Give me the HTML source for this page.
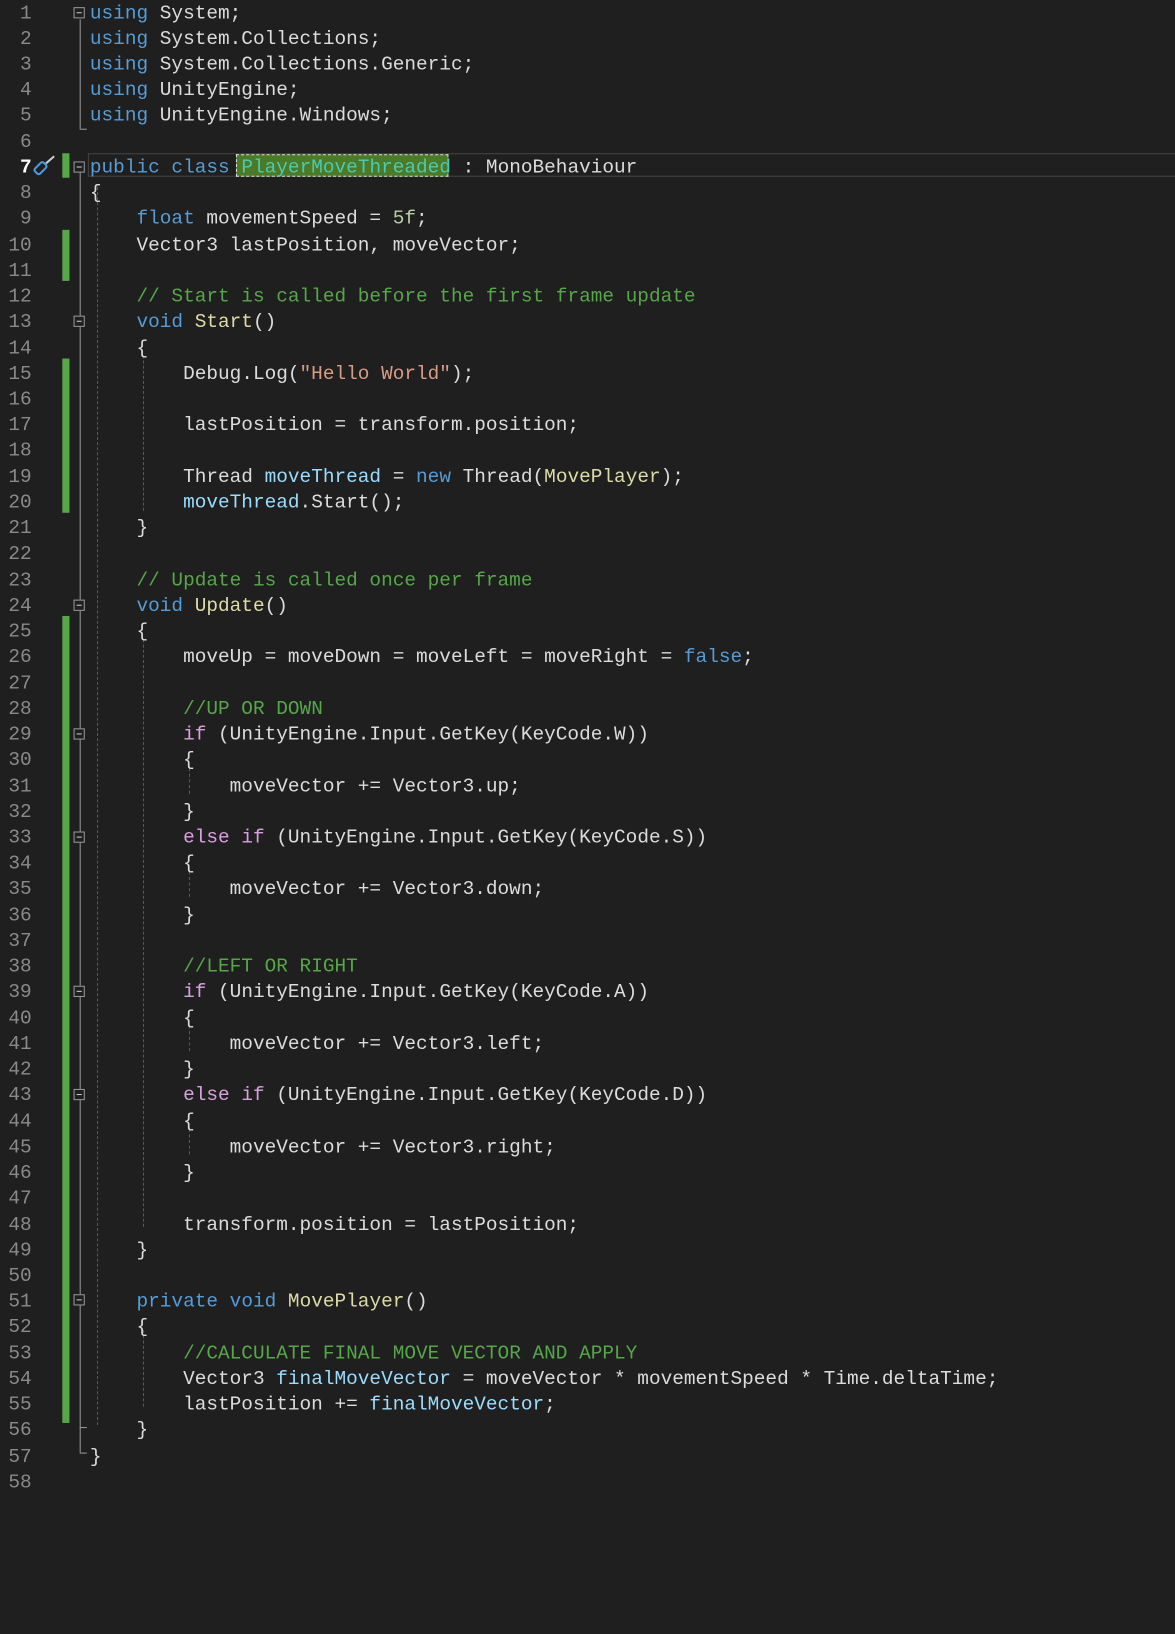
<!DOCTYPE html>
<html><head><meta charset="utf-8"><style>
html,body{margin:0;padding:0;background:#1f1f1f;width:1175px;height:1600px;overflow:hidden}
body{font-family:"Liberation Mono",monospace;font-size:19px}
#w{position:absolute;left:0;top:0;width:1175px;height:1600px;transform:scale(1.0215);transform-origin:0 0}
pre{margin:0;font:inherit;line-height:25.23px;position:absolute;top:0.5px}
#nums{left:0;width:31px;text-align:right;color:#8a8a8a}
#code{left:88px;color:#dcdcdc}
.k{color:#569cd6}.c{color:#57a64a}.s{color:#d69d85}.n{color:#b5cea8}.m{color:#dcdcaa}.p{color:#d8a0df}.v{color:#9cdcfe}
.g{position:absolute;left:61px;width:7px;background:#57a64a}
.f{position:absolute;left:72px;width:11px;height:11px;border:1px solid #999;background:#1f1f1f;box-sizing:border-box}
.f:after{content:"";position:absolute;left:2px;right:2px;top:4px;height:1px;background:#ccc}
.fl{position:absolute;left:78px;width:1px;background:#999}
.tk{position:absolute;left:78px;width:7px;height:1px;background:#999}
.ig{position:absolute;width:0;border-left:1px dashed #5a5a5a}
</style></head><body><div id="w">
<div style="position:absolute;left:86px;top:150px;width:1100px;height:23px;border:1px solid #464646;box-sizing:border-box"></div>
<div style="position:absolute;left:231px;top:151px;width:208px;height:22px;background:#4b7a28;border:1px dashed #ddd;box-sizing:border-box"></div>
<div class="g" style="top:150px;height:24px"></div>
<div class="g" style="top:225px;height:50px"></div>
<div class="g" style="top:351px;height:151px"></div>
<div class="g" style="top:603px;height:790px"></div>
<div class="fl" style="top:19px;height:107px"></div><div class="tk" style="top:126px"></div>
<div class="fl" style="top:168px;height:1254px"></div><div class="tk" style="top:1422px"></div>
<div class="tk" style="top:1397px"></div>
<div class="ig" style="left:95px;top:183px;height:1212px"></div>
<div class="ig" style="left:140px;top:348px;height:152px"></div>
<div class="ig" style="left:140px;top:626px;height:575px"></div>
<div class="ig" style="left:140px;top:1302px;height:75px"></div>
<div class="ig" style="left:185px;top:752px;height:25px"></div>
<div class="ig" style="left:185px;top:853px;height:25px"></div>
<div class="ig" style="left:185px;top:1004px;height:25px"></div>
<div class="ig" style="left:185px;top:1105px;height:25px"></div>
<div class="f" style="top:7px"></div>
<div class="f" style="top:158px"></div>
<div class="f" style="top:309px"></div>
<div class="f" style="top:587px"></div>
<div class="f" style="top:713px"></div>
<div class="f" style="top:814px"></div>
<div class="f" style="top:965px"></div>
<div class="f" style="top:1066px"></div>
<div class="f" style="top:1267px"></div>
<svg style="position:absolute;left:32px;top:151px" width="24" height="22" viewBox="0 0 24 22"><path d="M13 9 L21 2" stroke="#ccc" stroke-width="2"/><rect x="4" y="8" width="7" height="12" rx="2" transform="rotate(45 8 14)" fill="none" stroke="#4c9be0" stroke-width="2"/></svg>
<pre id="nums">1
2
3
4
5
6
<b style="color:#fff">7</b>
8
9
10
11
12
13
14
15
16
17
18
19
20
21
22
23
24
25
26
27
28
29
30
31
32
33
34
35
36
37
38
39
40
41
42
43
44
45
46
47
48
49
50
51
52
53
54
55
56
57
58</pre>
<pre id="code"><span class="k">using</span> System;
<span class="k">using</span> System.Collections;
<span class="k">using</span> System.Collections.Generic;
<span class="k">using</span> UnityEngine;
<span class="k">using</span> UnityEngine.Windows;

<span class="k">public</span> <span class="k">class</span> <span style="color:#4ec9b0">PlayerMoveThreaded</span> : MonoBehaviour
{
    <span class="k">float</span> movementSpeed = <span class="n">5f</span>;
    Vector3 lastPosition, moveVector;

    <span class="c">// Start is called before the first frame update</span>
    <span class="k">void</span> <span class="m">Start</span>()
    {
        Debug.Log(<span class="s">"Hello World"</span>);

        lastPosition = transform.position;

        Thread <span class="v">moveThread</span> = <span class="k">new</span> Thread(<span class="m">MovePlayer</span>);
        <span class="v">moveThread</span>.Start();
    }

    <span class="c">// Update is called once per frame</span>
    <span class="k">void</span> <span class="m">Update</span>()
    {
        moveUp = moveDown = moveLeft = moveRight = <span class="k">false</span>;

        <span class="c">//UP OR DOWN</span>
        <span class="p">if</span> (UnityEngine.Input.GetKey(KeyCode.W))
        {
            moveVector += Vector3.up;
        }
        <span class="p">else</span> <span class="p">if</span> (UnityEngine.Input.GetKey(KeyCode.S))
        {
            moveVector += Vector3.down;
        }

        <span class="c">//LEFT OR RIGHT</span>
        <span class="p">if</span> (UnityEngine.Input.GetKey(KeyCode.A))
        {
            moveVector += Vector3.left;
        }
        <span class="p">else</span> <span class="p">if</span> (UnityEngine.Input.GetKey(KeyCode.D))
        {
            moveVector += Vector3.right;
        }

        transform.position = lastPosition;
    }

    <span class="k">private</span> <span class="k">void</span> <span class="m">MovePlayer</span>()
    {
        <span class="c">//CALCULATE FINAL MOVE VECTOR AND APPLY</span>
        Vector3 <span class="v">finalMoveVector</span> = moveVector * movementSpeed * Time.deltaTime;
        lastPosition += <span class="v">finalMoveVector</span>;
    }
}
</pre>
</div></body></html>
